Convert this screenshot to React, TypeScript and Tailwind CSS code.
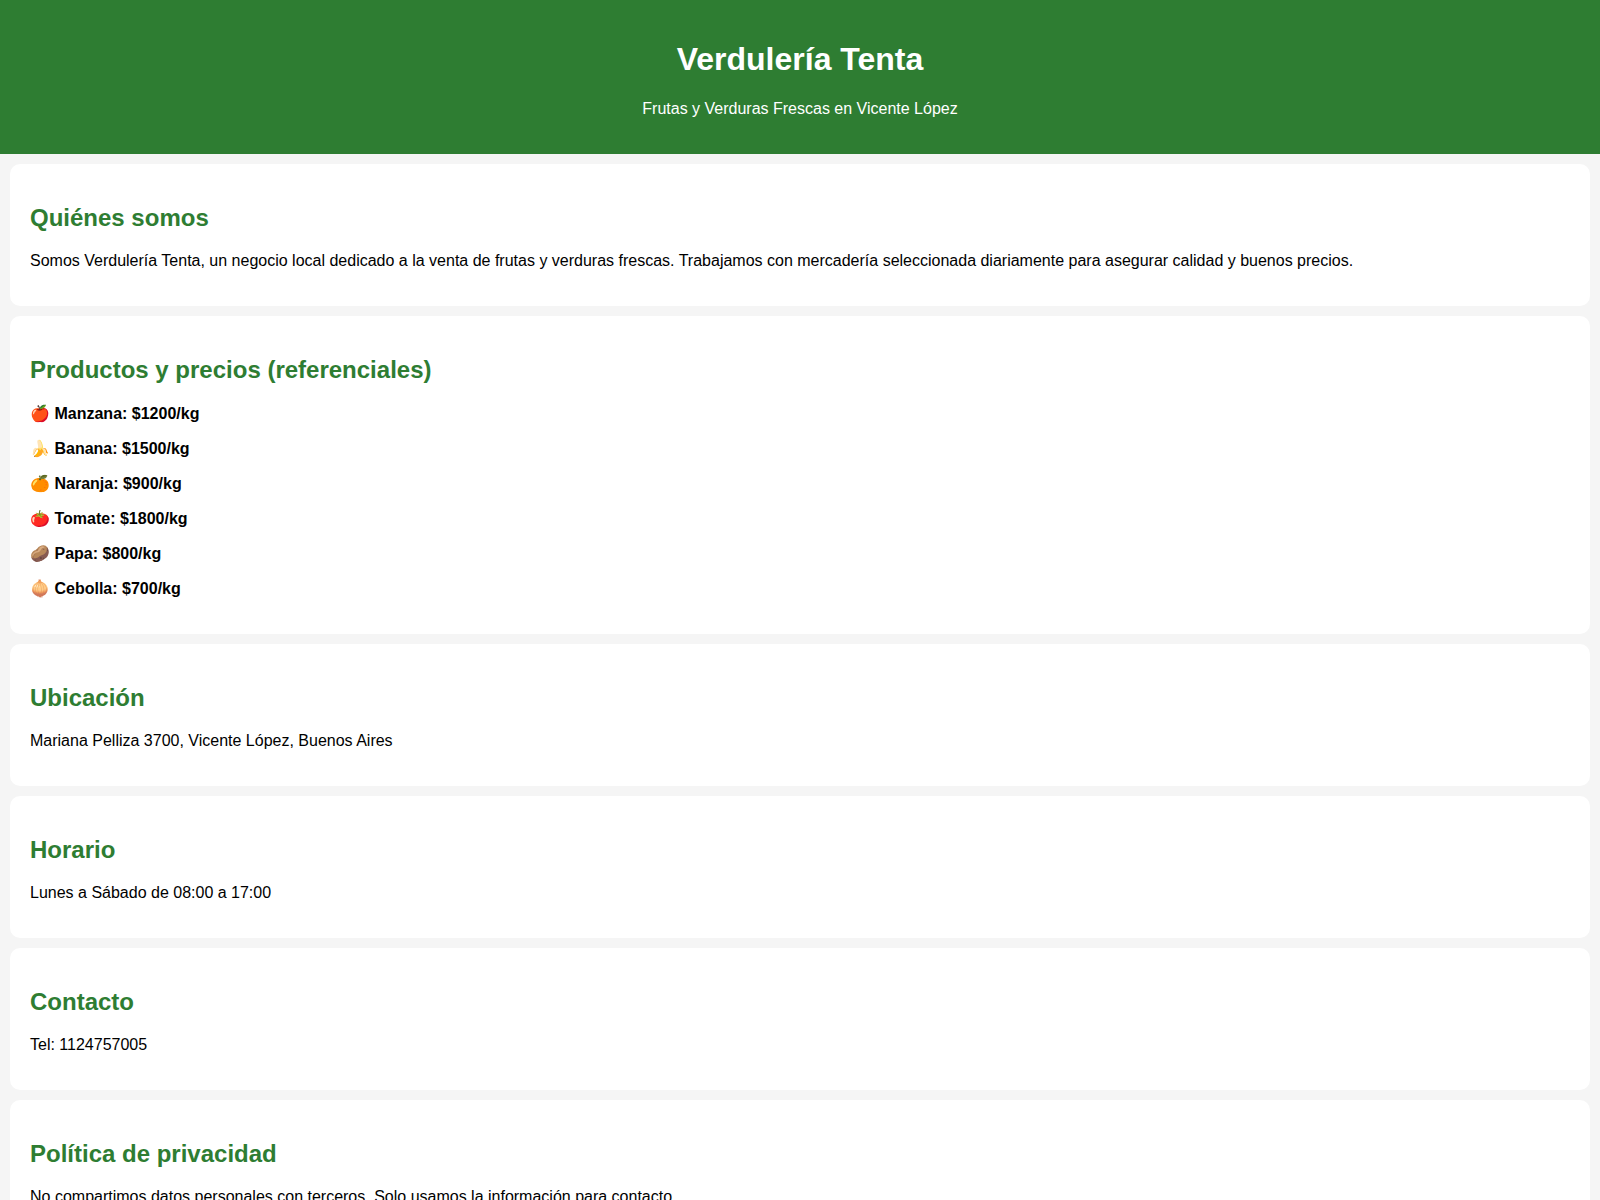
import type { ReactNode } from "react";

const products = [
  { icon: "🍎", name: "Manzana", price: 1200 },
  { icon: "🍌", name: "Banana", price: 1500 },
  { icon: "🍊", name: "Naranja", price: 900 },
  { icon: "🍅", name: "Tomate", price: 1800 },
  { icon: "🥔", name: "Papa", price: 800 },
  { icon: "🧅", name: "Cebolla", price: 700 },
];

const Section = ({ title, children }: { title: string; children: ReactNode }) => {
  return (
    <section className="bg-white rounded-[10px] px-5 pt-10 pb-9">
      <h2 className="text-2xl leading-7 font-bold text-[#2e7d32] mb-5">{title}</h2>
      {children}
    </section>
  );
};

const App = () => {
  return (
    <div className="min-h-screen bg-[#f5f5f5] text-black text-base leading-[18px] font-['Liberation_Sans',Arial,sans-serif]">
      <header className="bg-[#2e7d32] text-white text-center px-5 pt-10 pb-9">
        <h1 className="text-[32px] leading-[38px] font-bold mb-[22px]">Verdulería Tenta</h1>
        <p>Frutas y Verduras Frescas en Vicente López</p>
      </header>

      <main className="flex flex-col gap-[10px] p-[10px]">
        <Section title="Quiénes somos">
          <p>
            Somos Verdulería Tenta, un negocio local dedicado a la venta de frutas y verduras frescas. Trabajamos con mercadería seleccionada diariamente para asegurar calidad y buenos precios.
          </p>
        </Section>

        <Section title="Productos y precios (referenciales)">
          <ul className="space-y-4 font-bold leading-[19px]">
            {products.map((product) => (
              <li key={product.name}>
                {product.icon} {product.name}: ${product.price}/kg
              </li>
            ))}
          </ul>
        </Section>

        <Section title="Ubicación">
          <p>Mariana Pelliza 3700, Vicente López, Buenos Aires</p>
        </Section>

        <Section title="Horario">
          <p>Lunes a Sábado de 08:00 a 17:00</p>
        </Section>

        <Section title="Contacto">
          <p>Tel: 1124757005</p>
        </Section>

        <Section title="Política de privacidad">
          <p>No compartimos datos personales con terceros. Solo usamos la información para contacto.</p>
        </Section>
      </main>
    </div>
  );
};

export default App;
